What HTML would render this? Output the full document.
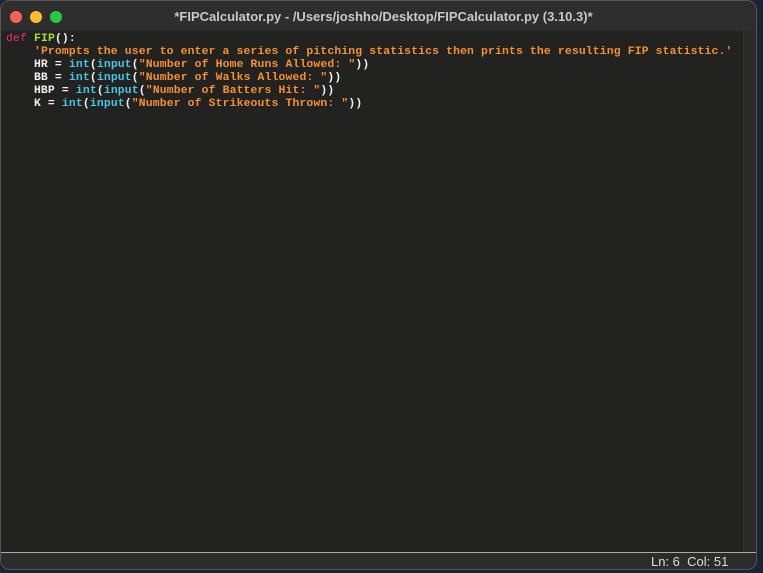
<!DOCTYPE html>
<html><head><style>
html,body{margin:0;padding:0;width:763px;height:573px;background:#1c2433;overflow:hidden}
.win{position:absolute;left:0;top:0;width:757px;height:570px;background:#2c2c2c;border:1px solid #555;border-radius:10px;overflow:hidden;box-sizing:border-box}
.title{position:absolute;left:0;top:0;width:100%;height:30px;background:#2e2e2e;color:#c8c8c8;font:bold 13px "Liberation Sans",sans-serif;text-align:center;line-height:31px;padding-left:10px;box-sizing:border-box}
.dot{position:absolute;top:10px;width:12px;height:12px;border-radius:50%}
.ed{position:absolute;left:0;top:30px;width:742px;height:521px;background:#222220}
.sb{position:absolute;left:742px;top:30px;width:15px;height:521px;background:#2a2a28;border-left:1px solid #333}
.line{position:absolute;left:0;top:551px;width:100%;height:1px;background:#aaa}
.status{position:absolute;left:0;top:552px;width:100%;height:18px;background:#2c2c2c;color:#ddd;font:13px "Liberation Sans",sans-serif}
pre{margin:0;position:absolute;left:5px;top:32px;font:bold 11.4px/13px "Liberation Mono",monospace;letter-spacing:0.15px;color:#f0f0f0}
.k{color:#e6306e;font-weight:normal}.f{color:#a6e22e}.s{color:#f7912d}.b{color:#45c8e8}
</style></head><body>
<div class="win">
<div class="title">*FIPCalculator.py - /Users/joshho/Desktop/FIPCalculator.py (3.10.3)*</div>
<div class="dot" style="left:9px;background:#fe5f57"></div>
<div class="dot" style="left:29px;background:#febc2e"></div>
<div class="dot" style="left:49px;background:#28c840"></div>
<div class="ed"></div><div class="sb"></div><div class="line"></div>
<pre><span class="k">def</span> <span class="f">FIP</span>():
    <span class="s">'Prompts the user to enter a series of pitching statistics then prints the resulting FIP statistic.'</span>
    HR = <span class="b">int</span>(<span class="b">input</span>(<span class="s">"Number of Home Runs Allowed: "</span>))
    BB = <span class="b">int</span>(<span class="b">input</span>(<span class="s">"Number of Walks Allowed: "</span>))
    HBP = <span class="b">int</span>(<span class="b">input</span>(<span class="s">"Number of Batters Hit: "</span>))
    K = <span class="b">int</span>(<span class="b">input</span>(<span class="s">"Number of Strikeouts Thrown: "</span>))</pre>
<div class="status"><span style="position:absolute;left:650px;top:1px">Ln: 6&nbsp;&nbsp;Col: 51</span></div>
</div>
</body></html>
